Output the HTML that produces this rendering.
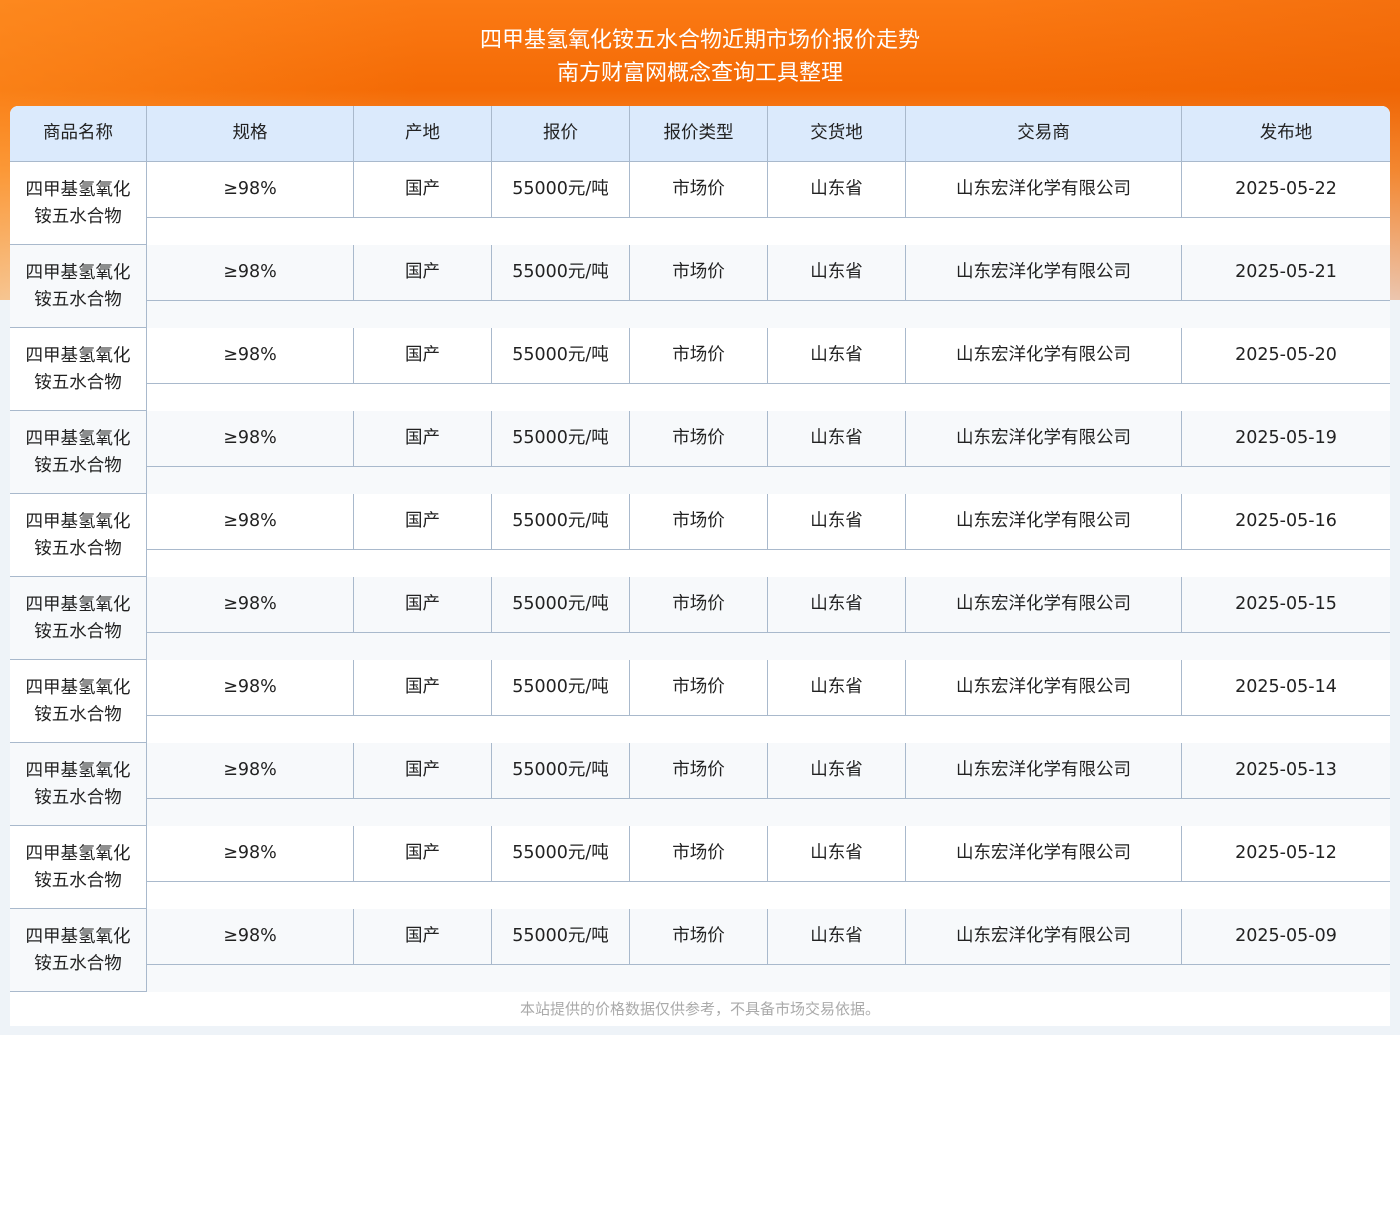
<!DOCTYPE html>
<html><head><meta charset="utf-8"><style>
*{margin:0;padding:0;box-sizing:border-box}
body{width:1400px;height:1205px;background:#fff;font-family:"DejaVu Sans","Noto Sans CJK SC",sans-serif;position:relative;overflow:hidden}
.bg{position:absolute;left:0;top:0;width:1400px;height:1035px;background:linear-gradient(180deg,#fb7a14 0px,#f46a05 90px,#f89a45 170px,#eef3f8 300px,#eef3f8 100%)}
.bg2{position:absolute;left:0;top:0;width:1400px;height:300px;background:linear-gradient(90deg,rgba(255,150,40,.5),rgba(255,110,0,0) 30%,rgba(240,100,0,0) 70%,rgba(230,90,0,.3))}
.t{position:absolute;left:0;width:1400px;text-align:center;color:#fff;font-size:22px;font-family:"Liberation Sans","WenQuanYi Zen Hei",sans-serif}
.tbl{position:absolute;left:10px;top:106px;width:1380px;height:920px;background:#fff;border-radius:8px 8px 0 0;overflow:hidden}
.c{position:absolute;display:flex;align-items:center;justify-content:center;text-align:center;color:#222;font-size:17.5px;line-height:27px}
.h{background:#dbeafc;border-right:1px solid #a9b9cc;border-bottom:1px solid #a9b9cc;top:0;height:56px}
.foot{position:absolute;top:886px;left:0;width:1380px;height:34px;text-align:center;color:#aaa;font-size:15px;line-height:34px}
</style></head><body>
<div class="bg"></div><div class="bg2"></div>
<div class="t" style="top:22px">四甲基氢氧化铵五水合物近期市场价报价走势</div>
<div class="t" style="top:55px">南方财富网概念查询工具整理</div>
<div class="tbl" id="tb"></div>
<script>
var xs=[0,137,344,482,620,758,896,1172,1380];
var hd=["商品名称","规格","产地","报价","报价类型","交货地","交易商","发布地"];
var dates=["2025-05-22","2025-05-21","2025-05-20","2025-05-19","2025-05-16","2025-05-15","2025-05-14","2025-05-13","2025-05-12","2025-05-09"];
var h="";
for(var i=0;i<8;i++){h+='<div class="c h" style="left:'+xs[i]+'px;width:'+(xs[i+1]-xs[i])+'px;'+(i==7?'border-right:none':'')+'">'+hd[i]+'</div>';}
for(var r=0;r<10;r++){
 var y=56+83*r, bg=r%2?'#f7f9fb':'#fff';
 h+='<div class="c" style="left:0;top:'+y+'px;width:137px;height:83px;padding-top:2px;background:'+bg+';border-right:1px solid #a9b9cc;border-bottom:1px solid #a9b9cc">四甲基氢氧化<br>铵五水合物</div>';
 h+='<div style="position:absolute;left:137px;top:'+y+'px;width:1243px;height:83px;background:'+bg+'"></div>';
 var v=["≥98%","国产","55000元/吨","市场价","山东省","山东宏洋化学有限公司",dates[r]];
 for(var i=1;i<8;i++){h+='<div class="c" style="left:'+xs[i]+'px;top:'+y+'px;width:'+(xs[i+1]-xs[i])+'px;height:56px;border-bottom:1px solid #a9b9cc;'+(i<7?'border-right:1px solid #a9b9cc':'')+'">'+v[i-1]+'</div>';}
}
h+='<div class="foot">本站提供的价格数据仅供参考，不具备市场交易依据。</div>';
document.getElementById('tb').innerHTML=h;
</script>
</body></html>
